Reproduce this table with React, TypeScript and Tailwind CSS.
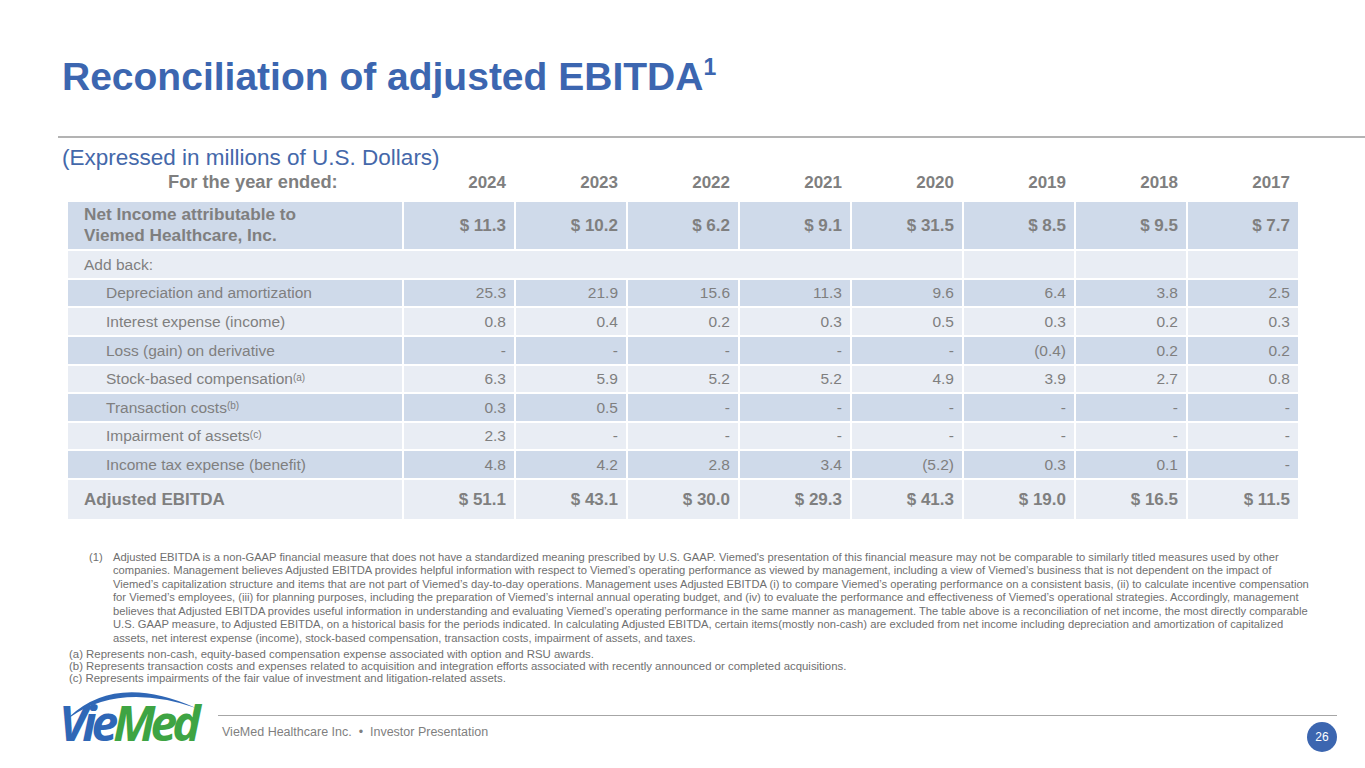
import React from "react";

const DARK = "bg-[#cfdaea]";
const LIGHT = "bg-[#e9edf4]";

type Row = { label: string; sup?: string; vals: string[]; dark: boolean };

const rows: Row[] = [
  { label: "Depreciation and amortization", vals: ["25.3", "21.9", "15.6", "11.3", "9.6", "6.4", "3.8", "2.5"], dark: true },
  { label: "Interest expense (income)", vals: ["0.8", "0.4", "0.2", "0.3", "0.5", "0.3", "0.2", "0.3"], dark: false },
  { label: "Loss (gain) on derivative", vals: ["-", "-", "-", "-", "-", "(0.4)", "0.2", "0.2"], dark: true },
  { label: "Stock-based compensation", sup: "(a)", vals: ["6.3", "5.9", "5.2", "5.2", "4.9", "3.9", "2.7", "0.8"], dark: false },
  { label: "Transaction costs", sup: "(b)", vals: ["0.3", "0.5", "-", "-", "-", "-", "-", "-"], dark: true },
  { label: "Impairment of assets", sup: "(c)", vals: ["2.3", "-", "-", "-", "-", "-", "-", "-"], dark: false },
  { label: "Income tax expense (benefit)", vals: ["4.8", "4.2", "2.8", "3.4", "(5.2)", "0.3", "0.1", "-"], dark: true },
];

const years = ["2024", "2023", "2022", "2021", "2020", "2019", "2018", "2017"];
const netIncome = ["$ 11.3", "$ 10.2", "$ 6.2", "$ 9.1", "$ 31.5", "$ 8.5", "$ 9.5", "$ 7.7"];
const adjusted = ["$ 51.1", "$ 43.1", "$ 30.0", "$ 29.3", "$ 41.3", "$ 19.0", "$ 16.5", "$ 11.5"];

const note1 = [
  "Adjusted EBITDA is a non-GAAP financial measure that does not have a standardized meaning prescribed by U.S. GAAP. Viemed's presentation of this financial measure may not be comparable to similarly titled measures used by other",
  "companies. Management believes Adjusted EBITDA provides helpful information with respect to Viemed’s operating performance as viewed by management, including a view of Viemed’s business that is not dependent on the impact of",
  "Viemed’s capitalization structure and items that are not part of Viemed’s day-to-day operations. Management uses Adjusted EBITDA (i) to compare Viemed’s operating performance on a consistent basis, (ii) to calculate incentive compensation",
  "for Viemed’s employees, (iii) for planning purposes, including the preparation of Viemed’s internal annual operating budget, and (iv) to evaluate the performance and effectiveness of Viemed’s operational strategies. Accordingly, management",
  "believes that Adjusted EBITDA provides useful information in understanding and evaluating Viemed’s operating performance in the same manner as management. The table above is a reconciliation of net income, the most directly comparable",
  "U.S. GAAP measure, to Adjusted EBITDA, on a historical basis for the periods indicated. In calculating Adjusted EBITDA, certain items(mostly non-cash) are excluded from net income including depreciation and amortization of capitalized",
  "assets, net interest expense (income), stock-based compensation, transaction costs, impairment of assets, and taxes.",
];

const notesAbc = [
  "(a) Represents non-cash, equity-based compensation expense associated with option and RSU awards.",
  "(b) Represents transaction costs and expenses related to acquisition and integration efforts associated with recently announced or completed acquisitions.",
  "(c) Represents impairments of the fair value of investment and litigation-related assets.",
];

function Logo() {
  return (
    <div className="relative w-[142px] h-[62px]">
      <svg className="absolute left-0 top-0" width="142" height="30" viewBox="0 0 142 30">
        <path d="M7 34 Q55 -16 138 21 Q58 -6 7 34 Z" fill="#2f67b6" />
      </svg>
      <div
        className="absolute left-[1px] top-[12px] whitespace-nowrap italic font-bold text-[48px] leading-none tracking-[-5px]"
        style={{ fontFamily: '"Open Sans", "Liberation Sans", sans-serif' }}
      >
        <span className="text-[#2f67b6]">Vie</span>
        <span className="text-[#3ea443]">Med</span>
      </div>
    </div>
  );
}

export default function App() {
  return (
    <div
      className="w-[1365px] h-[768px] bg-white overflow-hidden flex flex-col text-[#7f7f7f]"
      style={{ fontFamily: '"Liberation Sans", Arial, sans-serif' }}
    >
      <h1 className="ml-[62px] mt-[57px] text-[39px] leading-none font-bold text-[#3c66b0] whitespace-nowrap">
        Reconciliation of adjusted EBITDA
        <sup className="text-[23px] relative top-[-15px] align-baseline">1</sup>
      </h1>
      <div className="ml-[58px] mt-[40px] h-[2px] bg-[#b3b3b3]" />
      <div className="ml-[62px] mt-[9px] text-[22.5px] leading-none text-[#4468aa] whitespace-nowrap">
        (Expressed in millions of U.S. Dollars)
      </div>

      {/* header */}
      <div className="ml-[68px] mt-[3px] grid grid-cols-[334px_repeat(8,110px)] gap-x-[2px] text-[17px] leading-none font-bold items-end">
        <div className="pl-[100px] text-[18.3px]">For the year ended:</div>
        {years.map((y) => (
          <div key={y} className="text-right pr-[8px]">
            {y}
          </div>
        ))}
      </div>

      {/* table */}
      <div className="ml-[68px] mt-[11px] grid grid-cols-[334px_repeat(8,110px)] grid-rows-[47px_27px_repeat(7,26.6px)_39px] gap-[2px] text-[15.5px]">
        <div className={`${DARK} pl-[16px] flex flex-col justify-center font-bold text-[17.2px] leading-[21.5px] whitespace-nowrap`}>
          <div>Net Income attributable to</div>
          <div>Viemed Healthcare, Inc.</div>
        </div>
        {netIncome.map((v, i) => (
          <div key={i} className={`${DARK} flex items-center justify-end pr-[8px] font-bold text-[17px]`}>
            {v}
          </div>
        ))}

        <div className={`${LIGHT} col-span-6 pl-[16px] flex items-center`}>Add back:</div>
        <div className={LIGHT} />
        <div className={LIGHT} />
        <div className={LIGHT} />

        {rows.map((r) => (
          <React.Fragment key={r.label}>
            <div className={`${r.dark ? DARK : LIGHT} pl-[38px] flex items-center whitespace-nowrap`}>
              {r.label}
              {r.sup && <sup className="text-[10px] relative top-[-1px]">{r.sup}</sup>}
            </div>
            {r.vals.map((v, i) => (
              <div key={i} className={`${r.dark ? DARK : LIGHT} flex items-center justify-end pr-[8px]`}>
                {v}
              </div>
            ))}
          </React.Fragment>
        ))}

        <div className={`${LIGHT} pl-[16px] flex items-center font-bold text-[17px]`}>Adjusted EBITDA</div>
        {adjusted.map((v, i) => (
          <div key={i} className={`${LIGHT} flex items-center justify-end pr-[8px] font-bold text-[17px]`}>
            {v}
          </div>
        ))}
      </div>

      {/* footnotes */}
      <div className="mt-[32px] text-[#6f6f6f] whitespace-nowrap">
        <div className="flex ml-[89px] leading-[13.5px] text-[11.2px]">
          <div className="w-[24px]">(1)</div>
          <div>
            {note1.map((l, i) => (
              <div key={i}>{l}</div>
            ))}
          </div>
        </div>
        <div className="ml-[69px] mt-[3px] leading-[12px] text-[11.4px]">
          {notesAbc.map((l, i) => (
            <div key={i}>{l}</div>
          ))}
        </div>
      </div>

      {/* footer */}
      <div className="mt-auto mb-[16px] flex pl-[58px] pr-[28px]">
        <Logo />
        <div className="ml-[18px] flex-1 mt-[28px]">
          <div className="h-[1px] bg-[#a6a6a6]" />
          <div className="flex justify-between">
            <div className="mt-[10px] pl-[4px] text-[12.5px] leading-none text-[#7f7f7f] whitespace-nowrap">
              VieMed Healthcare Inc. &nbsp;•&nbsp; Investor Presentation
            </div>
            <div className="mt-[6px] w-[30px] h-[30px] rounded-full bg-[#3c66b0] text-white text-[12px] flex items-center justify-center">
              26
            </div>
          </div>
        </div>
      </div>
    </div>
  );
}
